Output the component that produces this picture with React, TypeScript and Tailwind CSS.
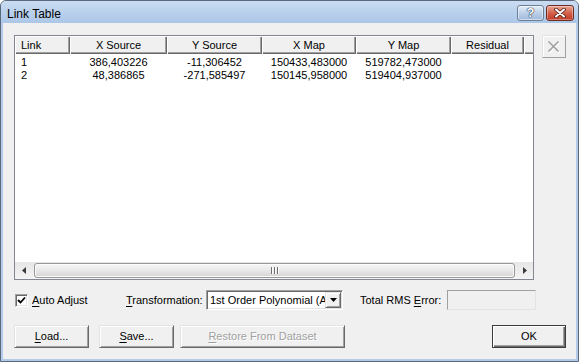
import React from "react"

const raised =
  "bg-[#f0f0f0] border border-t-[#e3e3e3] border-l-[#e3e3e3] border-r-[#696969] border-b-[#696969] shadow-[inset_1px_1px_0_#ffffff,inset_-1px_-1px_0_#a0a0a0]"
const sunken =
  "border border-t-[#a0a0a0] border-l-[#a0a0a0] border-r-[#ffffff] border-b-[#ffffff] shadow-[inset_1px_1px_0_#696969,inset_-1px_-1px_0_#e3e3e3]"

const columns = [
  { title: "Link", w: "w-[55px]", left: true },
  { title: "X Source", w: "w-[97px]" },
  { title: "Y Source", w: "w-[95px]" },
  { title: "X Map", w: "w-[94px]" },
  { title: "Y Map", w: "w-[95px]" },
  { title: "Residual", w: "w-[73px]" },
]

const rows = [
  ["1", "386,403226", "-11,306452", "150433,483000", "519782,473000", ""],
  ["2", "48,386865", "-271,585497", "150145,958000", "519404,937000", ""],
]

function U({ children }: { children: React.ReactNode }) {
  return <span className="underline underline-offset-[2px]">{children}</span>
}

export default function App() {
  return (
    <div className="w-[579px] h-[362px] flex flex-col bg-[#b3cbe8] border border-[#59687a] rounded-t-[6px] overflow-hidden font-['Liberation_Sans',Arial,sans-serif] text-[11px] text-black leading-none">
      {/* Title bar */}
      <div className="h-[22px] flex items-center pl-[6px] pr-[4px] bg-gradient-to-b from-[#cadcf1] to-[#abc6e7]">
        <span className="text-[12px] text-black pt-[3px]">Link Table</span>
        <div className="ml-auto flex items-center gap-[2px] mt-[1px]">
          <div className="w-[27px] h-[16px] rounded-[3px] border border-[#6d7f96] bg-gradient-to-b from-[#e4edf8] via-[#bcd0e8] to-[#9fb8da] flex items-center justify-center shadow-[inset_0_0_0_1px_rgba(255,255,255,0.5)]">
            <span className="font-bold text-[13px] text-white [text-shadow:0_0_1px_#1f2f45,0_0_1px_#1f2f45,0_0_1px_#1f2f45]">?</span>
          </div>
          <div className="w-[28px] h-[16px] rounded-[3px] border border-[#6e2d22] bg-gradient-to-b from-[#eaa697] via-[#d4604a] to-[#bf3a22] flex items-center justify-center shadow-[inset_0_0_0_1px_rgba(255,255,255,0.35)]">
            <svg width="12" height="10" viewBox="0 0 12 10">
              <path d="M2 1.5 L10 8.5 M10 1.5 L2 8.5" stroke="#4a1a12" strokeWidth="3.6" strokeLinecap="round" />
              <path d="M2 1.5 L10 8.5 M10 1.5 L2 8.5" stroke="#ffffff" strokeWidth="2" strokeLinecap="round" />
            </svg>
          </div>
        </div>
      </div>

      {/* Client area */}
      <div className="flex-1 mx-[2px] mb-[2px] bg-[#f0f0f0] pt-[12px] pl-[11px] flex flex-col">
        <div className="flex items-start">
          {/* List view */}
          <div className="w-[520px] h-[245px] border border-[#828790] bg-white flex flex-col">
            <div className="h-[18px] flex shrink-0 bg-[#f0f0f0]">
              {columns.map((c) => (
                <div
                  key={c.title}
                  className={`${c.w} h-full flex items-center ${c.left ? "pl-[6px]" : "justify-center"} bg-[#f0f0f0] shadow-[inset_1px_1px_0_#ffffff,inset_-1px_-1px_0_#696969,inset_-2px_-2px_0_#a0a0a0]`}
                >
                  {c.title}
                </div>
              ))}
              <div className="flex-1 h-full bg-[#f0f0f0] shadow-[inset_1px_1px_0_#ffffff,inset_0_-1px_0_#696969,inset_0_-2px_0_#a0a0a0]" />
            </div>
            <div className="flex-1 pt-[2px]">
              {rows.map((r) => (
                <div key={r[0]} className="h-[13px] flex items-center">
                  {r.map((v, i) => (
                    <div
                      key={i}
                      className={`${columns[i].w} ${columns[i].left ? "pl-[6px]" : "text-center"}`}
                    >
                      {v}
                    </div>
                  ))}
                </div>
              ))}
            </div>
            {/* Horizontal scrollbar */}
            <div className="h-[17px] shrink-0 flex bg-gradient-to-b from-[#e6e6e6] to-[#f4f4f4]">
              <div className="w-[17px] flex items-center justify-center">
                <svg width="4" height="7" viewBox="0 0 4 7">
                  <path d="M4 0 L0 3.5 L4 7 Z" fill="#3a3a3a" />
                </svg>
              </div>
              <div className="flex-1 py-[1px] pl-[2px] pr-[1px]">
                <div className="h-full rounded-[3px] border border-[#979797] bg-gradient-to-b from-[#f6f6f6] via-[#e8e8e8] to-[#d4d4d4] shadow-[inset_0_0_0_1px_#fbfbfb] flex items-center justify-center gap-[1px]">
                  {[0, 1, 2].map((i) => (
                    <div key={i} className="w-[2px] h-[7px] border-l border-[#6f6f6f] bg-[#ffffff]" />
                  ))}
                </div>
              </div>
              <div className="w-[17px] flex items-center justify-center">
                <svg width="4" height="7" viewBox="0 0 4 7">
                  <path d="M0 0 L4 3.5 L0 7 Z" fill="#3a3a3a" />
                </svg>
              </div>
            </div>
          </div>

          {/* Delete link button */}
          <div className={`ml-[8px] w-[24px] h-[23px] flex items-center justify-center ${raised} border-r-[#a0a0a0] border-b-[#a0a0a0] shadow-[inset_1px_1px_0_#ffffff]`}>
            <svg width="14" height="14" viewBox="0 0 14 14">
              <path d="M2.5 2.5 L12.5 12.5 M12.5 2.5 L2.5 12.5" stroke="#ffffff" strokeWidth="1.6" />
              <path d="M1.5 1.5 L11.5 11.5 M11.5 1.5 L1.5 11.5" stroke="#a0a0a0" strokeWidth="1.6" />
            </svg>
          </div>
        </div>

        {/* Options row */}
        <div className="mt-[10px] h-[20px] flex items-center">
          <div className="w-[112px] flex items-center">
            <div className={`ml-[1px] w-[13px] h-[13px] bg-white ${sunken} flex items-center justify-center`}>
              <svg width="9" height="9" viewBox="0 0 9 9">
                <path d="M1 4 L3.5 6.5 L8 1.5" fill="none" stroke="#000000" strokeWidth="1.8" />
              </svg>
            </div>
            <span className="ml-[4px]">
              <U>A</U>uto Adjust
            </span>
          </div>
          <div className="w-[80px]">
            <U>T</U>ransformation:
          </div>
          <div className={`w-[137px] h-[20px] bg-white ${sunken} flex items-center overflow-hidden`}>
            <span className="pl-[3px] flex-1 whitespace-nowrap overflow-hidden">1st Order Polynomial (Affine)</span>
            <div className={`w-[16px] h-[16px] mr-[1px] shrink-0 ${raised} flex items-center justify-center`}>
              <svg width="7" height="4" viewBox="0 0 7 4">
                <path d="M0 0 L7 0 L3.5 4 Z" fill="#000000" />
              </svg>
            </div>
          </div>
          <div className="ml-[17px] w-[87px]">
            Total RMS <U>E</U>rror:
          </div>
          <div className="w-[89px] h-[20px] border border-[#a0a0a0] border-r-[#e3e3e3] border-b-[#e3e3e3] bg-[#f0f0f0]" />
        </div>

        {/* Button row */}
        <div className="mt-[15px] h-[23px] flex items-center">
          <div className={`w-[75px] h-[23px] ${raised} flex items-center justify-center`}>
            <span>
              <U>L</U>oad...
            </span>
          </div>
          <div className={`ml-[10px] w-[75px] h-[23px] ${raised} flex items-center justify-center`}>
            <span>
              <U>S</U>ave...
            </span>
          </div>
          <div className={`ml-[6px] w-[165px] h-[23px] ${raised} flex items-center justify-center text-[#a0a0a0] [text-shadow:1px_1px_0_#ffffff]`}>
            <span>
              <U>R</U>estore From Dataset
            </span>
          </div>
          <div className="ml-[147px] w-[74px] h-[23px] border border-[#3c3c3c] bg-[#f0f0f0] shadow-[inset_1px_1px_0_#ffffff,inset_-1px_-1px_0_#696969,inset_-2px_-2px_0_#a0a0a0] flex items-center justify-center">
            OK
          </div>
        </div>
      </div>
    </div>
  )
}
